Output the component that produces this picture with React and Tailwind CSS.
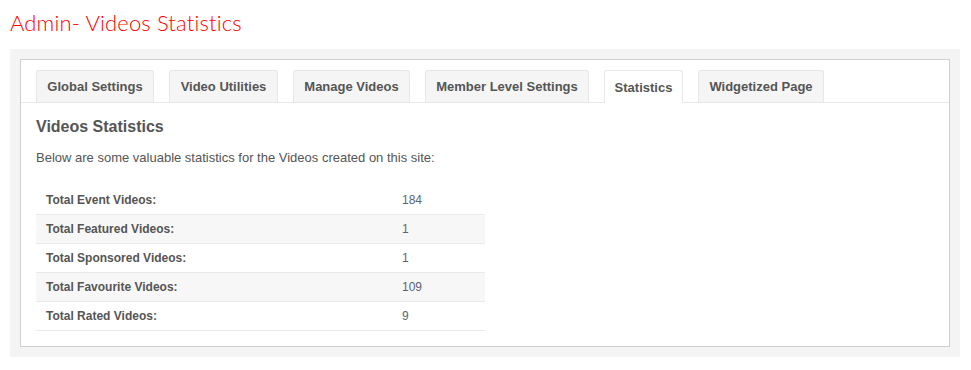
export default function App() {
  const tabs = [
    ["Global Settings", "w-[118px]"],
    ["Video Utilities", "w-[109px]"],
    ["Manage Videos", "w-[117px]"],
    ["Member Level Settings", "w-[164px]"],
    ["Statistics", "w-[79px]"],
    ["Widgetized Page", "w-[126px]"],
  ];
  const rows = [
    ["Total Event Videos:", "184"],
    ["Total Featured Videos:", "1"],
    ["Total Sponsored Videos:", "1"],
    ["Total Favourite Videos:", "109"],
    ["Total Rated Videos:", "9"],
  ];
  return (
    <div className="w-[971px] h-[370px] bg-white pt-[9px] pl-[10px] pr-[11px]" style={{ fontFamily: '"Liberation Sans", Arial, sans-serif' }}>
      <h1 className="text-[22px] leading-[28px] text-[#f00] font-light tracking-[0.15px] h-[40px]" style={{ fontFamily: 'Lato, "Liberation Sans", sans-serif' }}>Admin- Videos Statistics</h1>
      <div className="bg-[#f4f4f4] px-[10px] pt-[10px] pb-[10px] h-[308px]">
        <div className="bg-white border border-[#cfcfcf] h-[288px]">
          <div className="flex gap-[15px] px-[15px] pt-[10px] border-b border-[#e7e7e7] h-[43px]">
            {tabs.map(([t, w]) => {
              const active = t === "Statistics";
              return (
                <div
                  key={t}
                  className={
                    w + " text-center " +
                    (active
                      ? "h-[33px] -mb-px bg-white border border-b-0 border-[#e7e7e7] rounded-t-[3px] pt-[9px] text-[13px] font-bold text-[#555] leading-[16px]"
                      : "h-[32px] bg-[#f5f5f5] border border-b-0 border-[#e7e7e7] rounded-t-[3px] pt-[8px] text-[13px] font-bold text-[#555] leading-[16px]")
                  }
                >
                  {t}
                </div>
              );
            })}
          </div>
          <div className="px-[15px]">
            <h2 className="text-[16px] font-bold text-[#555] leading-[20px] mt-[14px]">Videos Statistics</h2>
            <p className="text-[13px] text-[#555] leading-[16px] mt-[13px]">Below are some valuable statistics for the Videos created on this site:</p>
            <div className="w-[449px] mt-[20px]">
              {rows.map(([l, v], i) => (
                <div key={l} className={"flex h-[29px] items-center border-b border-[#eaeaea] " + (i % 2 === 1 ? "bg-[#f7f7f7]" : "bg-white")}>
                  <div className="w-[366px] pl-[10px] text-[12px] font-bold text-[#555]">{l}</div>
                  <div className="text-[12px] text-[#5c6472]">{v}</div>
                </div>
              ))}
            </div>
          </div>
        </div>
      </div>
    </div>
  );
}
